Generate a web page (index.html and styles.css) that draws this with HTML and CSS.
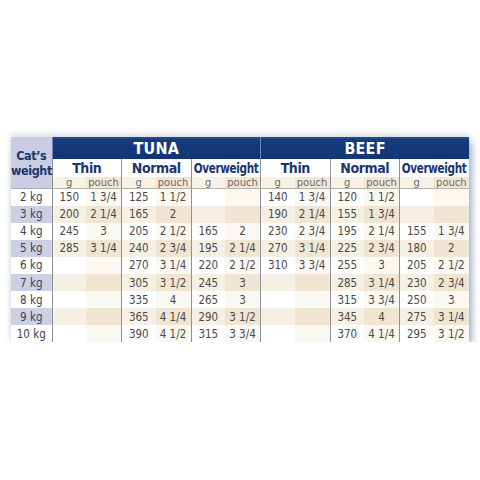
FILE: index.html
```html
<!DOCTYPE html>
<html>
<head>
<meta charset="utf-8">
<link rel="stylesheet" href="styles.css">
</head>
<body>
<div class="wrap">
<table class="feed">
  <colgroup>
    <col class="c-w">
    <col class="c-g"><col class="c-p"><col class="c-g"><col class="c-p"><col class="c-g"><col class="c-p">
    <col class="c-g"><col class="c-p"><col class="c-g"><col class="c-p"><col class="c-g"><col class="c-p">
  </colgroup>
  <thead>
    <tr class="r-food">
      <th class="weight-head" rowspan="3">Cat’s<br>weight</th>
      <th class="food sep" colspan="6">TUNA</th>
      <th class="food sep" colspan="6">BEEF</th>
    </tr>
    <tr class="r-type">
      <th class="type sep" colspan="2">Thin</th>
      <th class="type sep" colspan="2">Normal</th>
      <th class="type sep" colspan="2"><span class="narrow">Overweight</span></th>
      <th class="type sep" colspan="2">Thin</th>
      <th class="type sep" colspan="2">Normal</th>
      <th class="type sep" colspan="2"><span class="narrow">Overweight</span></th>
    </tr>
    <tr class="r-unit">
      <th class="g sep">g</th><th class="p">pouch</th>
      <th class="g sep">g</th><th class="p">pouch</th>
      <th class="g sep">g</th><th class="p">pouch</th>
      <th class="g sep">g</th><th class="p">pouch</th>
      <th class="g sep">g</th><th class="p">pouch</th>
      <th class="g sep">g</th><th class="p">pouch</th>
    </tr>
  </thead>
  <tbody>
    <tr><th class="w">2 kg</th><td class="g sep">150</td><td class="p">1 3/4</td><td class="g sep">125</td><td class="p">1 1/2</td><td class="g sep"></td><td class="p"></td><td class="g sep">140</td><td class="p">1 3/4</td><td class="g sep">120</td><td class="p">1 1/2</td><td class="g sep"></td><td class="p"></td></tr>
    <tr class="alt"><th class="w">3 kg</th><td class="g sep">200</td><td class="p">2 1/4</td><td class="g sep">165</td><td class="p">2</td><td class="g sep"></td><td class="p"></td><td class="g sep">190</td><td class="p">2 1/4</td><td class="g sep">155</td><td class="p">1 3/4</td><td class="g sep"></td><td class="p"></td></tr>
    <tr><th class="w">4 kg</th><td class="g sep">245</td><td class="p">3</td><td class="g sep">205</td><td class="p">2 1/2</td><td class="g sep">165</td><td class="p">2</td><td class="g sep">230</td><td class="p">2 3/4</td><td class="g sep">195</td><td class="p">2 1/4</td><td class="g sep">155</td><td class="p">1 3/4</td></tr>
    <tr class="alt"><th class="w">5 kg</th><td class="g sep">285</td><td class="p">3 1/4</td><td class="g sep">240</td><td class="p">2 3/4</td><td class="g sep">195</td><td class="p">2 1/4</td><td class="g sep">270</td><td class="p">3 1/4</td><td class="g sep">225</td><td class="p">2 3/4</td><td class="g sep">180</td><td class="p">2</td></tr>
    <tr><th class="w">6 kg</th><td class="g sep"></td><td class="p"></td><td class="g sep">270</td><td class="p">3 1/4</td><td class="g sep">220</td><td class="p">2 1/2</td><td class="g sep">310</td><td class="p">3 3/4</td><td class="g sep">255</td><td class="p">3</td><td class="g sep">205</td><td class="p">2 1/2</td></tr>
    <tr class="alt"><th class="w">7 kg</th><td class="g sep"></td><td class="p"></td><td class="g sep">305</td><td class="p">3 1/2</td><td class="g sep">245</td><td class="p">3</td><td class="g sep"></td><td class="p"></td><td class="g sep">285</td><td class="p">3 1/4</td><td class="g sep">230</td><td class="p">2 3/4</td></tr>
    <tr><th class="w">8 kg</th><td class="g sep"></td><td class="p"></td><td class="g sep">335</td><td class="p">4</td><td class="g sep">265</td><td class="p">3</td><td class="g sep"></td><td class="p"></td><td class="g sep">315</td><td class="p">3 3/4</td><td class="g sep">250</td><td class="p">3</td></tr>
    <tr class="alt"><th class="w">9 kg</th><td class="g sep"></td><td class="p"></td><td class="g sep">365</td><td class="p">4 1/4</td><td class="g sep">290</td><td class="p">3 1/2</td><td class="g sep"></td><td class="p"></td><td class="g sep">345</td><td class="p">4</td><td class="g sep">275</td><td class="p">3 1/4</td></tr>
    <tr><th class="w">10 kg</th><td class="g sep"></td><td class="p"></td><td class="g sep">390</td><td class="p">4 1/2</td><td class="g sep">315</td><td class="p">3 3/4</td><td class="g sep"></td><td class="p"></td><td class="g sep">370</td><td class="p">4 1/4</td><td class="g sep">295</td><td class="p">3 1/2</td></tr>
  </tbody>
</table>
</div>
</body>
</html>
```
FILE: styles.css
```css
html, body {
  margin: 0;
  padding: 0;
  background: #ffffff;
}
.wrap {
  padding: 137px 0 0 11px;
}
.feed {
  border-collapse: collapse;
  table-layout: fixed;
  width: 458px;
  font-family: "DejaVu Sans Condensed", "DejaVu Sans", sans-serif;
  box-shadow: 3px 5px 7px rgba(70, 95, 160, 0.45), 0 -3px 6px rgba(120, 130, 160, 0.25);
  background: #fff;
}
.c-w { width: 41px; }
.c-g { width: 34px; }
.c-p { width: 35.5px; }
.feed th, .feed td {
  padding: 0;
  text-align: center;
  overflow: hidden;
  white-space: nowrap;
}
.sep { border-left: 1px solid #8d8f99; }
.r-food { height: 22px; }
.food {
  background: linear-gradient(#2a4c8c 0, #163b7c 3px, #123676 100%);
  color: #ffffff;
  font-size: 16px;
  font-weight: bold;
  letter-spacing: 0.2px;
  border-left-color: #6f86b3;
}
.weight-head {
  background: #c9cce2;
  color: #1b3570;
  font-size: 12.5px;
  font-weight: bold;
  letter-spacing: -0.4px;
  line-height: 15px;
  border-bottom: 1px solid #a9adc0;
}
.r-type { height: 18px; }
.type {
  background: #ffffff;
  color: #1b3570;
  font-size: 14px;
  font-weight: bold;
  letter-spacing: -0.4px;
  line-height: 18px;
}
.narrow {
  display: inline-block;
  transform: scaleX(0.83);
  transform-origin: center;
  margin: 0 -8px;
}
.r-unit { height: 11px; }
.r-unit th {
  font-size: 11px;
  font-weight: normal;
  color: #6a6a6a;
  line-height: 11px;
  border-bottom: 1px solid #b3b3b3;
}
.r-unit .g { background: #f7f1e6; }
.r-unit .p { background: #efe6d4; }
tbody tr { height: 17.1px; }
tbody td {
  font-size: 11.5px;
  color: #4a4a4a;
}
tbody .w {
  font-size: 11.5px;
  font-weight: normal;
  color: #3d4050;
  background: #ffffff;
}
tbody .g { background: #ffffff; }
tbody .p { background: #fbf8f1; }
tbody tr.alt .w { background: #cdd0e5; }
tbody tr.alt .g { background: #f6f0e4; }
tbody tr.alt .p { background: #efe5d1; }
```
